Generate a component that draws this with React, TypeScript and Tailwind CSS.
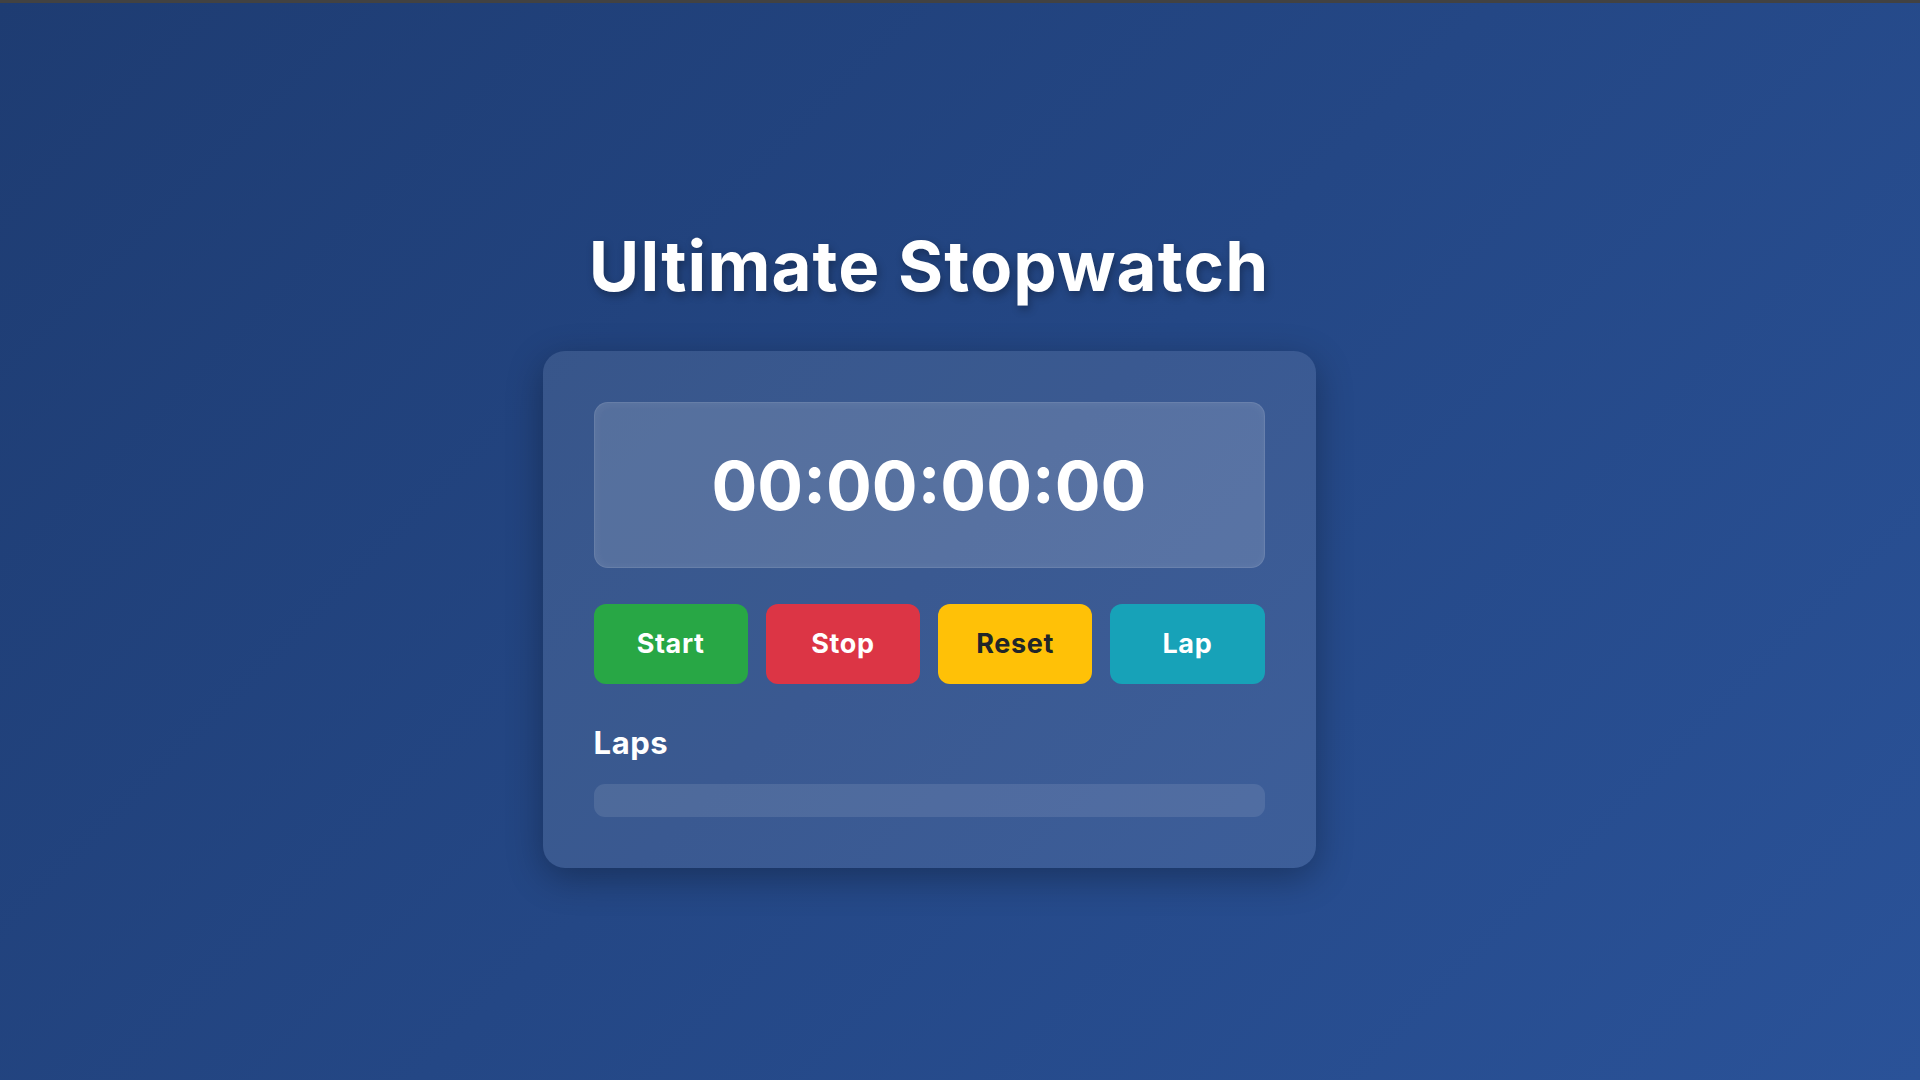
import { useEffect, useRef, useState } from "react";

const pad = (n: number) => n.toString().padStart(2, "0");

function formatTime(ms: number) {
  const h = Math.floor(ms / 3600000);
  const m = Math.floor((ms % 3600000) / 60000);
  const s = Math.floor((ms % 60000) / 1000);
  const cs = Math.floor((ms % 1000) / 10);
  return `${pad(h)}:${pad(m)}:${pad(s)}:${pad(cs)}`;
}

export default function App() {
  const [elapsed, setElapsed] = useState(0);
  const [running, setRunning] = useState(false);
  const [laps, setLaps] = useState<number[]>([]);
  const startRef = useRef(0);

  useEffect(() => {
    if (!running) return;
    startRef.current = Date.now() - elapsed;
    const id = setInterval(() => setElapsed(Date.now() - startRef.current), 10);
    return () => clearInterval(id);
    // eslint-disable-next-line react-hooks/exhaustive-deps
  }, [running]);

  const handleReset = () => {
    setRunning(false);
    setElapsed(0);
    setLaps([]);
  };

  const handleLap = () => {
    if (running) setLaps([elapsed, ...laps]);
  };

  return (
    <div className="min-h-screen flex flex-col bg-[linear-gradient(135deg,#1e3c72,#2a5298)] font-['Inter',sans-serif] text-white">
      <div className="h-[3px] bg-[#424242]" />
      <main className="flex-1 flex flex-col items-center justify-center pt-[10px] pr-[62px]">
        <h1 className="text-[69px] font-bold leading-[1.2] tracking-[1.1px] [text-shadow:2px_4px_8px_rgba(0,0,0,0.3)] mb-[43px]">
          Ultimate Stopwatch
        </h1>
        <section className="w-[773px] rounded-[22px] bg-white/10 px-[51px] pt-[51px] pb-[51px] shadow-[0_10px_36px_rgba(0,0,0,0.3)]">
          <div className="h-[166px] rounded-[14px] bg-white/15 border border-white/10 flex items-center justify-center shadow-[inset_1px_1px_10px_rgba(255,255,255,0.06)]">
            <span className="text-[68px] font-bold">{formatTime(elapsed)}</span>
          </div>
          <div className="grid grid-cols-4 gap-[18px] mt-[36px]">
            <button
              onClick={() => setRunning(true)}
              className="h-[80px] rounded-[12px] bg-[#28a745] text-[27px] font-bold tracking-[0.6px] text-white"
            >
              Start
            </button>
            <button
              onClick={() => setRunning(false)}
              className="h-[80px] rounded-[12px] bg-[#dc3545] text-[27px] font-bold tracking-[0.6px] text-white"
            >
              Stop
            </button>
            <button
              onClick={handleReset}
              className="h-[80px] rounded-[12px] bg-[#ffc107] text-[27px] font-bold tracking-[0.6px] text-[#212529]"
            >
              Reset
            </button>
            <button
              onClick={handleLap}
              className="h-[80px] rounded-[12px] bg-[#17a2b8] text-[27px] font-bold tracking-[0.6px] text-white"
            >
              Lap
            </button>
          </div>
          <h2 className="mt-[41px] text-[31px] font-bold leading-[36px] tracking-[0.6px]">Laps</h2>
          <ul className="mt-[23px] min-h-[33px] rounded-[11px] bg-white/10 px-4">
            {laps.map((lap, i) => (
              <li key={i} className="py-2 text-[20px] border-b border-white/10 last:border-0">
                Lap {laps.length - i}: {formatTime(lap)}
              </li>
            ))}
          </ul>
        </section>
      </main>
    </div>
  );
}
